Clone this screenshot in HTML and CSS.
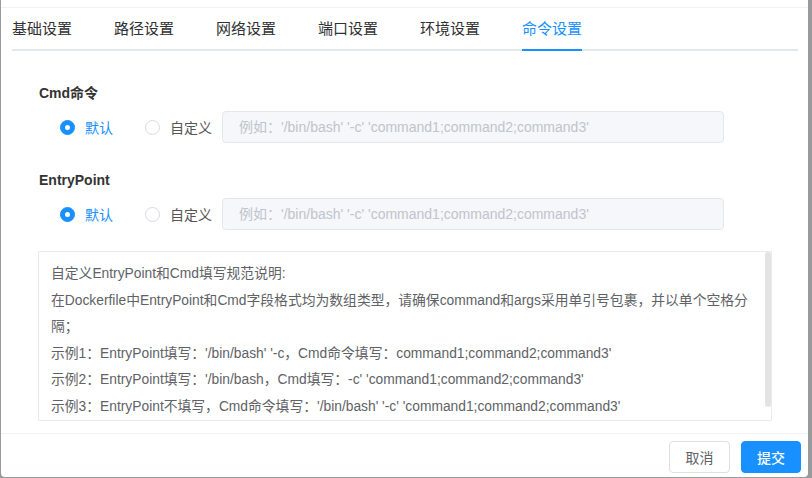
FILE: index.html
```html
<!DOCTYPE html>
<html lang="zh-CN">
<head>
<meta charset="utf-8">
<title>命令设置</title>
<link rel="stylesheet" href="styles.css">
</head>
<body>
<div class="dialog">
  <div class="dialog-top"></div>
  <div class="tabs">
    <div class="tab-nav">
      <div class="tab">基础设置</div>
      <div class="tab">路径设置</div>
      <div class="tab">网络设置</div>
      <div class="tab">端口设置</div>
      <div class="tab">环境设置</div>
      <div class="tab active">命令设置</div>
    </div>
  </div>
  <div class="body">
    <div class="form-item">
      <div class="label">Cmd命令</div>
      <div class="row">
        <label class="radio checked"><span class="dot"></span><span class="rtext">默认</span></label>
        <label class="radio"><span class="dot"></span><span class="rtext">自定义</span></label>
        <div class="input">例如：'/bin/bash' '-c' 'command1;command2;command3'</div>
      </div>
    </div>
    <div class="form-item second">
      <div class="label">EntryPoint</div>
      <div class="row">
        <label class="radio checked"><span class="dot"></span><span class="rtext">默认</span></label>
        <label class="radio"><span class="dot"></span><span class="rtext">自定义</span></label>
        <div class="input">例如：'/bin/bash' '-c' 'command1;command2;command3'</div>
      </div>
    </div>
    <div class="desc">
      <div class="desc-inner">
        <p>自定义EntryPoint和Cmd填写规范说明:</p>
        <p>在Dockerfile中EntryPoint和Cmd字段格式均为数组类型，请确保command和args采用单引号包裹，并以单个空格分隔；</p>
        <p>示例1：EntryPoint填写：'/bin/bash' '-c，Cmd命令填写：command1;command2;command3'</p>
        <p>示例2：EntryPoint填写：'/bin/bash，Cmd填写：-c' 'command1;command2;command3'</p>
        <p>示例3：EntryPoint不填写，Cmd命令填写：'/bin/bash' '-c' 'command1;command2;command3'</p>
      </div>
      <div class="scroll-thumb"></div>
    </div>
  </div>
  <div class="footer">
    <button class="btn">取消</button>
    <button class="btn primary">提交</button>
  </div>
</div>
</body>
</html>
```
FILE: styles.css
```css
* { box-sizing: border-box; }
html, body { margin: 0; padding: 0; }
body {
  background: #999a9c;
  font-family: "Liberation Sans", "Noto Sans CJK SC", sans-serif;
  width: 812px;
  height: 478px;
  overflow: hidden;
}
.dialog {
  margin-left: 1px;
  width: 807px;
  height: 477px;
  background: #fff;
  border-radius: 0 0 4px 4px;
  display: flex;
  flex-direction: column;
}
.dialog-top {
  height: 8px;
  border-bottom: 1px solid #f0f1f3;
}
.tabs {
  padding: 0 10px 0 11px;
}
.tab-nav {
  display: flex;
  border-bottom: 2px solid #e4e7ed;
  height: 43px;
}
.tab {
  font-size: 15px;
  line-height: 41px;
  height: 43px;
  color: #303133;
  margin-right: 42px;
  border-bottom: 2px solid transparent;
  margin-bottom: -2px;
}
.tab.active {
  color: #1890ff;
  border-bottom-color: #1890ff;
}
.body {
  padding: 32px 0 0 37px;
}
.label {
  font-size: 14px;
  font-weight: bold;
  line-height: 20px;
  color: #333;
  padding-left: 1px;
}
.form-item.second { margin-top: 27px; }
.row {
  margin-top: 8px;
  display: flex;
  align-items: center;
  height: 32px;
  padding-left: 22px;
}
.radio {
  display: flex;
  align-items: center;
  margin-right: 32px;
  font-size: 14px;
  color: #555;
}
.radio + .radio { margin-right: 10px; }
.dot {
  width: 15px;
  height: 15px;
  border-radius: 50%;
  border: 1px solid #d7dae2;
  background: #fff;
  margin-right: 10px;
  display: flex;
  align-items: center;
  justify-content: center;
}
.radio.checked .dot {
  background: #1890ff;
  border-color: #1890ff;
}
.radio.checked .dot::after {
  content: "";
  width: 5px;
  height: 5px;
  border-radius: 50%;
  background: #fff;
}
.radio.checked .rtext { color: #1890ff; }
.input {
  width: 502px;
  height: 32px;
  border: 1px solid #e4e7ed;
  border-radius: 4px;
  background: #f5f7fa;
  color: #c0c4cc;
  font-size: 14px;
  line-height: 30px;
  padding-left: 16px;
  white-space: nowrap;
}
.desc {
  position: relative;
  margin-top: 21px;
  width: 734px;
  height: 170px;
  border: 1px solid #e8eaf0;
  overflow: hidden;
}
.scroll-thumb {
  position: absolute;
  right: 0;
  top: 0;
  width: 6px;
  height: 155px;
  background: #e3e3e3;
  border-radius: 3px;
}
.desc-inner {
  padding: 9px 18px 13px 12px;
  font-size: 13.8px;
  line-height: 26.6px;
  color: #606266;
}
.desc-inner p { margin: 0; }
.footer {
  margin-top: 12px;
  border-top: 1px solid #f0f1f3;
  padding: 7px 7px 0 0;
  display: flex;
  justify-content: flex-end;
  gap: 11px;
}
.btn {
  width: 61px;
  height: 32px;
  border-radius: 4px;
  border: 1px solid #dcdfe6;
  background: #fff;
  color: #606266;
  font-family: "Liberation Sans", "Noto Sans CJK SC", sans-serif;
  font-size: 14px;
  padding: 0;
}
.btn.primary {
  background: #1890ff;
  border-color: #1890ff;
  color: #fff;
  width: 60px;
  font-weight: 500;
}
```
